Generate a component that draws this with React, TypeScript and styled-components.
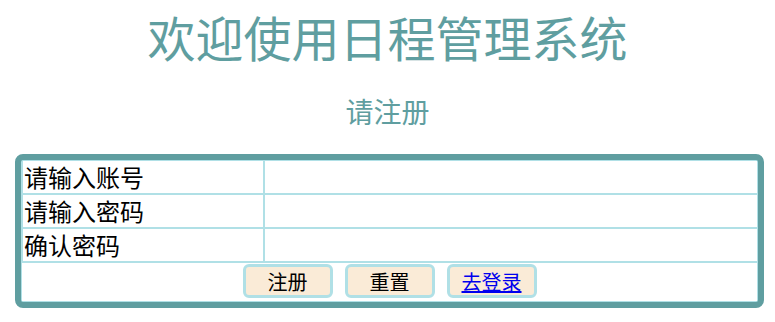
import styled, { createGlobalStyle } from 'styled-components';

const GlobalStyle = createGlobalStyle`
  body {
    margin: 0;
    background: #ffffff;
    font-family: "Noto Sans CJK SC", "Noto Sans", sans-serif;
  }
`;

const fields = ['请输入账号', '请输入密码', '确认密码'];

export default function App() {
  return (
    <>
      <GlobalStyle />
      <Page>
        <Titulo>欢迎使用日程管理系统</Titulo>
        <Subtitulo>请注册</Subtitulo>
        <Formulario onSubmit={(e) => e.preventDefault()}>
          {fields.map((label) => (
            <Linha key={label}>
              <Rotulo>{label}</Rotulo>
              <Campo>
                <Entrada type={label.includes('账号') ? 'text' : 'password'} />
              </Campo>
            </Linha>
          ))}
          <LinhaBotoes>
            <Botao type="submit">注册</Botao>
            <Botao type="reset">重置</Botao>
            <Botao type="button">
              <LinkLogin href="#login">去登录</LinkLogin>
            </Botao>
          </LinhaBotoes>
        </Formulario>
      </Page>
    </>
  );
}

const Page = styled.div`
  width: 775px;
  padding-top: 1px;
`;

const Titulo = styled.h1`
  margin: 0;
  text-align: center;
  font-size: 48px;
  line-height: 70px;
  font-weight: normal;
  color: #5f9ea0;
`;

const Subtitulo = styled.h3`
  margin: 20px 0 0 0;
  text-align: center;
  font-size: 28px;
  line-height: 40px;
  font-weight: normal;
  color: #5f9ea0;
`;

const Formulario = styled.form`
  box-sizing: border-box;
  width: 749px;
  margin: 23px 0 0 15px;
  border: 6px solid #5f9ea0;
  border-radius: 8px;
  background: #b0e0e6;
  padding: 1px 1px 1px 2px;
  display: grid;
  grid-template-columns: 240px 1fr;
  grid-template-rows: repeat(3, 32px) 38px;
  row-gap: 2px;
  column-gap: 2px;
`;

const Linha = styled.div`
  display: contents;
`;

const Rotulo = styled.div`
  background: #ffffff;
  font-size: 24px;
  line-height: 32px;
  color: #000000;
  padding-left: 1px;
  white-space: nowrap;
`;

const Campo = styled.div`
  background: #ffffff;
  display: flex;
`;

const Entrada = styled.input`
  flex: 1;
  min-width: 0;
  border: none;
  background: transparent;
  font-size: 20px;
  outline: none;
`;

const LinhaBotoes = styled.div`
  grid-column: 1 / -1;
  background: #ffffff;
  display: flex;
  justify-content: center;
  align-items: flex-start;
  gap: 12px;
  padding-top: 1px;
  box-sizing: border-box;
  margin-left: -1px;
`;

const Botao = styled.button`
  box-sizing: border-box;
  width: 90px;
  height: 34px;
  border: 3px solid #b0e0e6;
  border-radius: 6px;
  background: #faebd7;
  font-family: "Noto Sans CJK SC", sans-serif;
  font-size: 20px;
  color: #000000;
  padding: 0;
  cursor: pointer;
`;

const LinkLogin = styled.a`
  color: #0000ee;
  text-decoration: underline;
`;
